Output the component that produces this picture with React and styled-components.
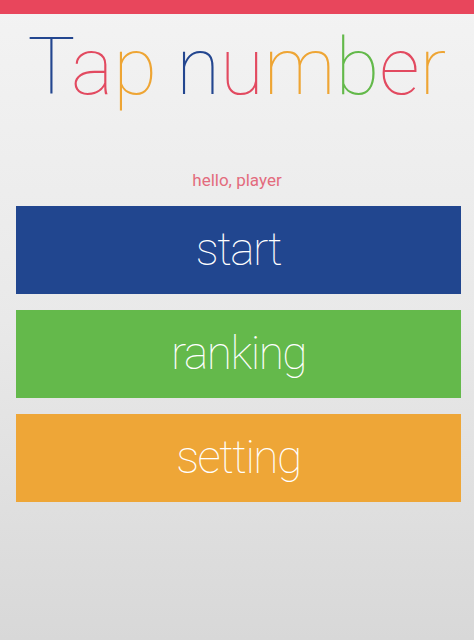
import React from 'react';
import styled, { createGlobalStyle } from 'styled-components';

const GlobalStyle = createGlobalStyle`
  html, body {
    margin: 0;
    padding: 0;
  }
  body {
    font-family: Roboto, "Liberation Sans", sans-serif;
  }
`;

const Screen = styled.div`
  width: 474px;
  height: 640px;
  background: linear-gradient(to bottom, #f3f3f3 0%, #e9e9e9 50%, #d8d8d8 100%);
  display: flex;
  flex-direction: column;
  overflow: hidden;
`;

const TopBar = styled.div`
  height: 14px;
  background-color: #e8465c;
`;

const Title = styled.h1`
  margin: 5px 0 0;
  text-align: center;
  font-family: Roboto, "Liberation Sans", sans-serif;
  font-weight: 100;
  font-size: 80px;
  line-height: 96px;
  letter-spacing: 0;
`;

const Letter = styled.span`
  color: ${p => p.$color};
`;

const Greeting = styled.p`
  margin: 55px 0 0;
  text-align: center;
  font-size: 17px;
  line-height: 20px;
  color: #e36b7d;
`;

const Menu = styled.div`
  display: flex;
  flex-direction: column;
  gap: 16px;
  padding: 0 13px 0 16px;
  margin-top: 16px;
`;

const MenuButton = styled.button`
  height: 88px;
  border: none;
  background-color: ${p => p.$bg};
  color: #fff;
  font-family: Roboto, "Liberation Sans", sans-serif;
  font-weight: 100;
  font-size: 46px;
  letter-spacing: -1.5px;
  padding: 0 0 2px;
  cursor: pointer;
`;

const BLUE = '#23468f';
const RED = '#e24a60';
const ORANGE = '#eea534';
const GREEN = '#63b94a';

const title = [
  ['T', BLUE], ['a', RED], ['p', ORANGE], [' ', BLUE],
  ['n', BLUE], ['u', RED], ['m', ORANGE], ['b', GREEN], ['e', RED], ['r', ORANGE],
];

function App() {
  return (
    <>
      <GlobalStyle />
      <Screen>
        <TopBar />
        <Title>
          {title.map(([ch, c], i) => (
            <Letter key={i} $color={c}>{ch}</Letter>
          ))}
        </Title>
        <Greeting>hello, player</Greeting>
        <Menu>
          <MenuButton $bg="#21468f">start</MenuButton>
          <MenuButton $bg="#64b94b">ranking</MenuButton>
          <MenuButton $bg="#eea637">setting</MenuButton>
        </Menu>
      </Screen>
    </>
  );
}

export default App;
